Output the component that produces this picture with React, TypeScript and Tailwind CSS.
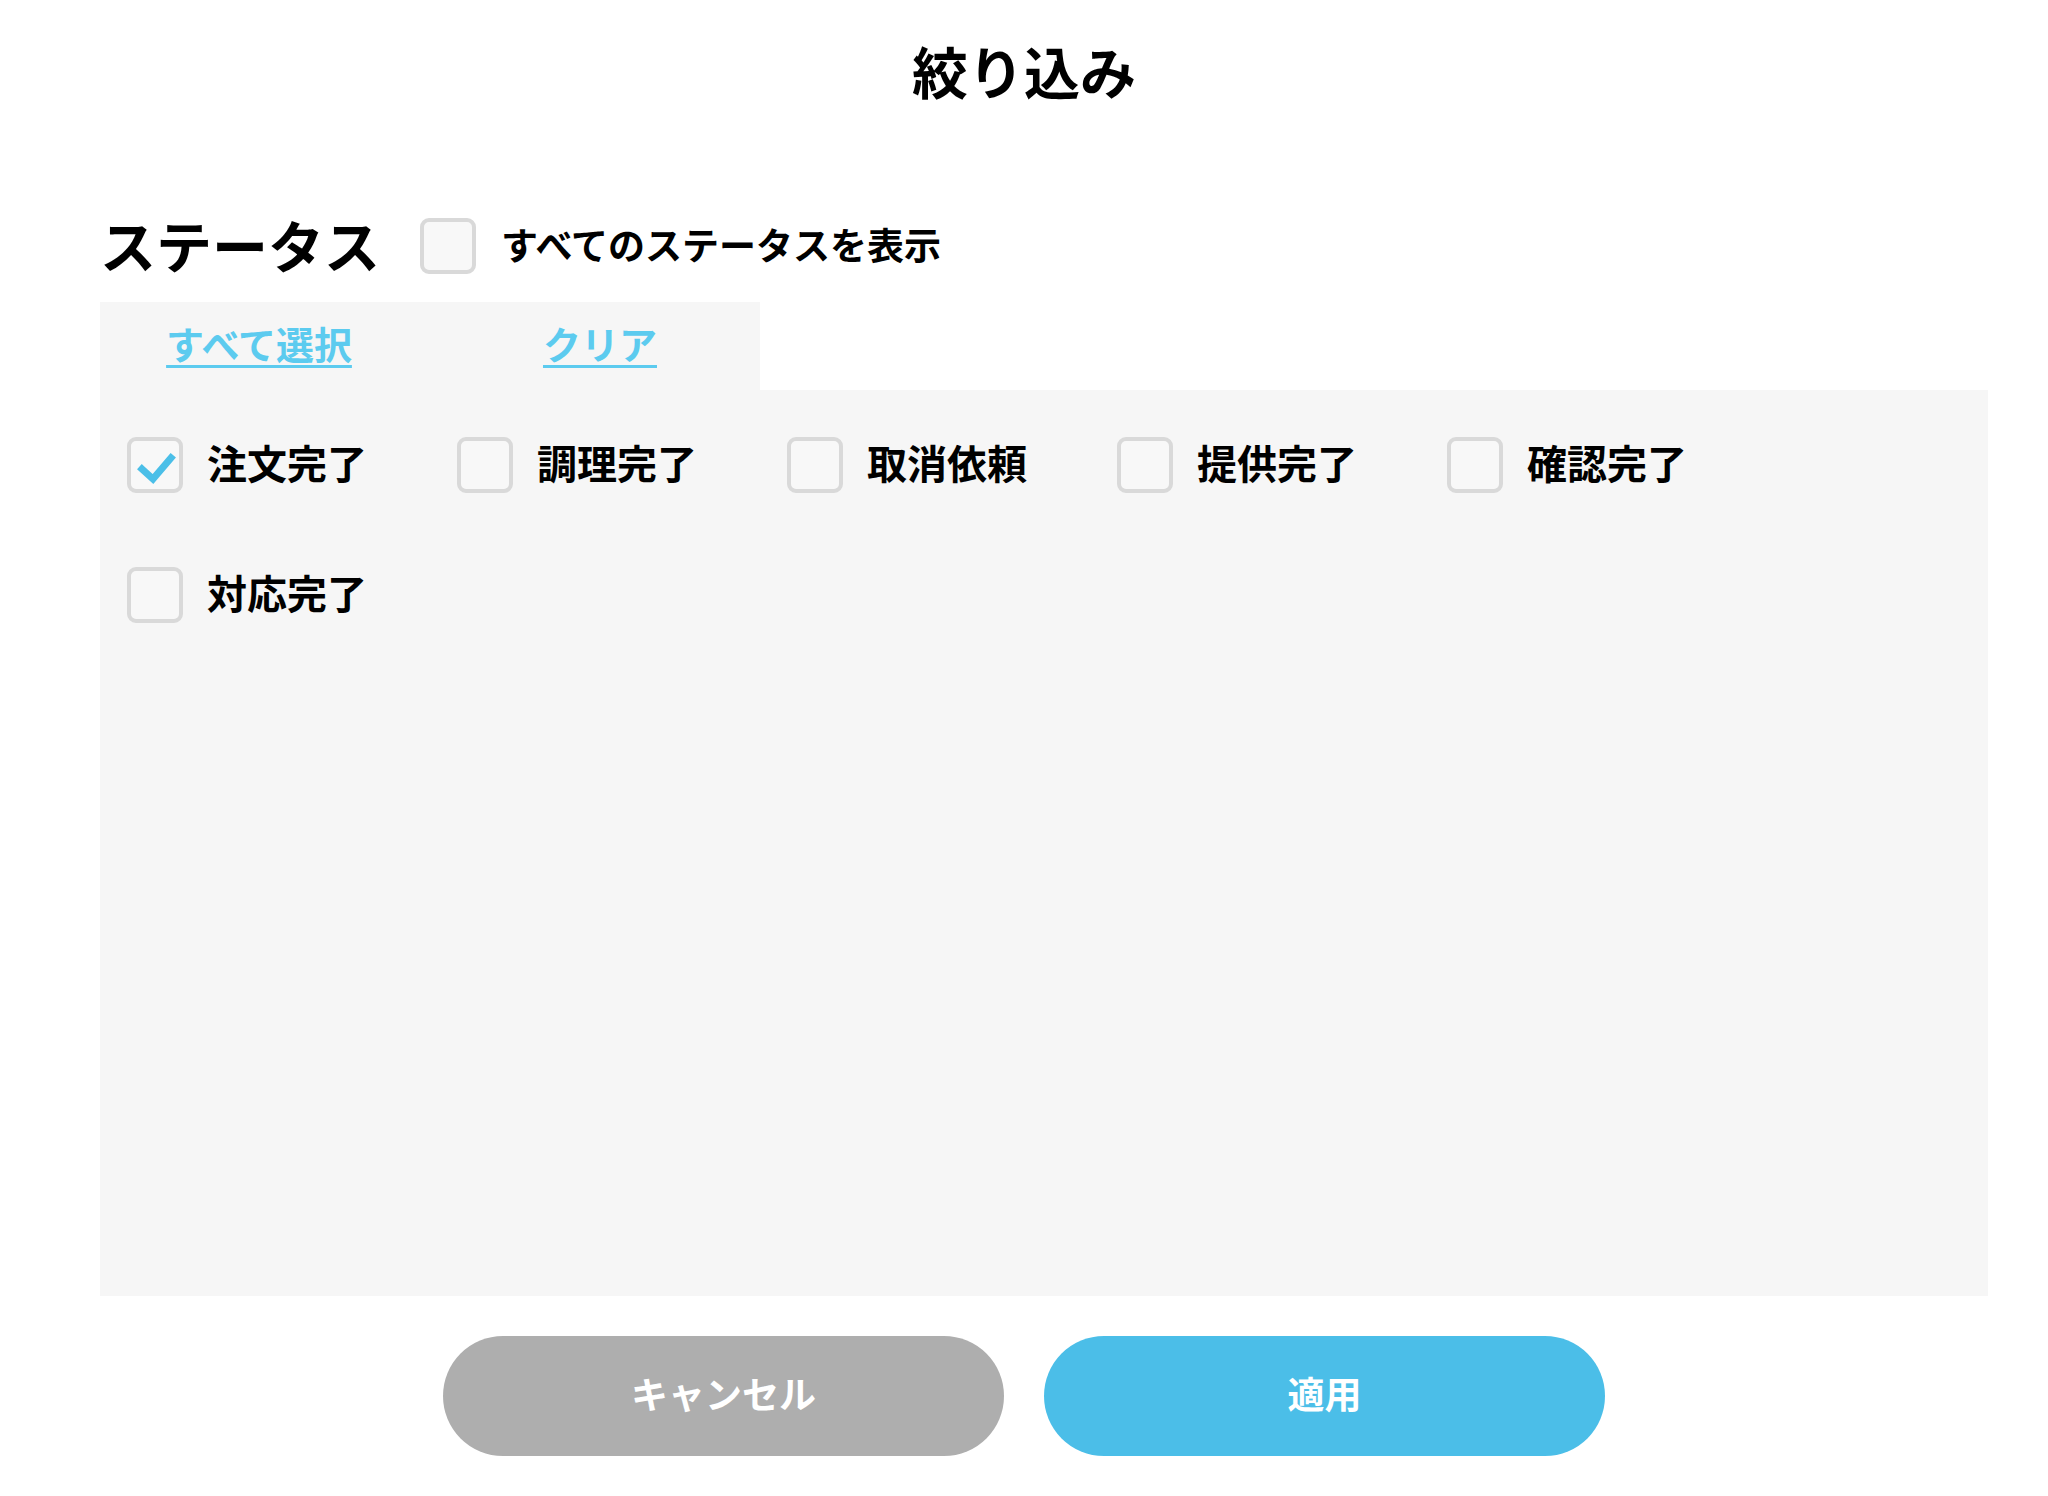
import React, { useState } from 'react';

const STATUSES = ['注文完了', '調理完了', '取消依頼', '提供完了', '確認完了', '対応完了'];

const CheckBox: React.FC<{ checked: boolean; onClick?: () => void }> = ({ checked, onClick }) => (
  <button
    type="button"
    onClick={onClick}
    className="w-[56px] h-[56px] shrink-0 rounded-[9px] border-[4px] border-[#d9d9d9] bg-[#f8f8f8] flex items-center justify-center"
  >
    {checked && (
      <svg width="44" height="44" viewBox="0 0 44 44">
        <path d="M9 26 L20 36 L38 15" fill="none" stroke="#4bbfe8" strokeWidth="7" strokeLinecap="square" />
      </svg>
    )}
  </button>
);

export default function App() {
  const [selected, setSelected] = useState<string[]>(['注文完了']);
  const [showAll, setShowAll] = useState(false);

  const toggle = (s: string) =>
    setSelected((prev) => (prev.includes(s) ? prev.filter((x) => x !== s) : [...prev, s]));

  return (
    <div
      className="w-full h-[1496px] bg-white text-black"
      style={{ fontFamily: '"Noto Sans CJK JP", "Noto Sans", sans-serif' }}
    >
      <div className="h-[148px] flex items-center justify-center">
        <h1 className="text-[56px] font-bold leading-none -translate-y-[4px]">絞り込み</h1>
      </div>

      <div className="ml-[100px] w-[1888px]">
        <div className="mt-[70px] h-[56px] flex items-center">
          <h2 className="w-[280px] shrink-0 text-[56px] font-bold leading-none whitespace-nowrap -translate-y-[2px]">ステータス</h2>
          <div className="ml-[40px]">
            <CheckBox checked={showAll} onClick={() => setShowAll(!showAll)} />
          </div>
          <span className="ml-[25px] text-[37px] font-bold leading-none -translate-y-[2px]">すべてのステータスを表示</span>
        </div>

        <div className="mt-[28px] w-[660px] h-[88px] bg-[#f6f6f6] grid grid-cols-2 items-center text-center">
          <button
            type="button"
            onClick={() => setSelected(STATUSES)}
            className="text-[38px] font-bold leading-none text-[#5ccbef] underline underline-offset-[6px] decoration-[3px] -translate-x-[6px] -translate-y-[3px]"
          >
            すべて選択
          </button>
          <button
            type="button"
            onClick={() => setSelected([])}
            className="text-[38px] font-bold leading-none text-[#5ccbef] underline underline-offset-[6px] decoration-[3px] translate-x-[5px] -translate-y-[3px]"
          >
            クリア
          </button>
        </div>

        <div className="h-[906px] bg-[#f6f6f6] pt-[47px] pl-[27px]">
          <div className="flex flex-wrap gap-y-[74px]">
            {STATUSES.map((s) => (
              <label key={s} className="w-[330px] h-[56px] flex items-center cursor-pointer">
                <CheckBox checked={selected.includes(s)} onClick={() => toggle(s)} />
                <span className="ml-[24px] text-[40px] font-bold leading-none -translate-y-[3px]">{s}</span>
              </label>
            ))}
          </div>
        </div>
      </div>

      <div className="mt-[40px] flex justify-center gap-[40px]">
        <button
          type="button"
          className="w-[561px] h-[120px] rounded-full bg-[#aeaeae] text-white text-[37px] font-bold leading-none"
        >
          <span className="inline-block -translate-y-[3px]">キャンセル</span>
        </button>
        <button
          type="button"
          className="w-[561px] h-[120px] rounded-full bg-[#4bbee8] text-white text-[37px] font-bold leading-none"
        >
          <span className="inline-block -translate-y-[3px]">適用</span>
        </button>
      </div>
    </div>
  );
}
